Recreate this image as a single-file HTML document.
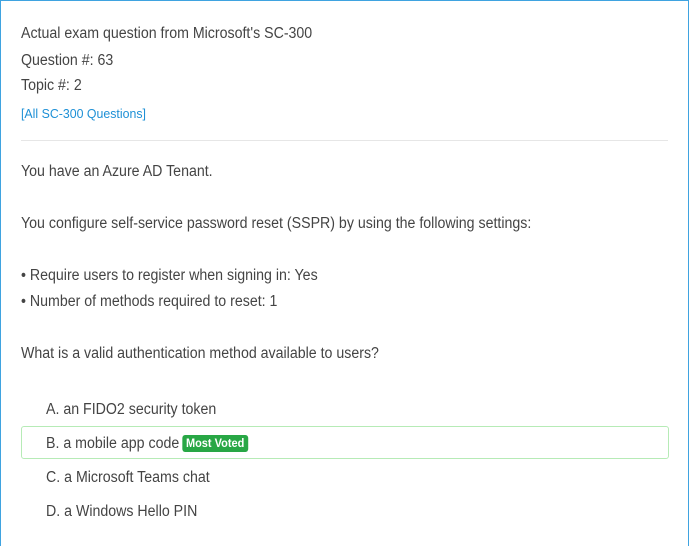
<!DOCTYPE html>
<html><head><style>
html,body{margin:0;padding:0;background:#fff}
body{width:690px;height:541px;position:relative;overflow:hidden;font-family:"Liberation Sans",sans-serif;color:#444}
.frame{position:absolute;left:0;top:0;width:687px;height:545px;border:1px solid #3fa3e0;border-bottom:none}
.t{position:absolute;left:21px;font-size:15.5px;white-space:nowrap;transform:scaleX(0.915);transform-origin:left center;line-height:20px}
.link{color:#1e90d6;font-size:13px;transform:scaleX(0.95)}
hr{position:absolute;left:21px;top:140px;width:647px;margin:0;border:0;border-top:1px solid #e6e6e6}
.box{position:absolute;left:21px;top:426px;width:646px;height:31px;border:1px solid #b6ebb6;border-radius:3px}
.badge{display:inline-block;background:#28a745;color:#fff;font-weight:bold;font-size:12px;padding:1px 4px;border-radius:3px;line-height:15px;vertical-align:1px;margin-left:-1px}
</style></head><body>
<div class="frame"></div>
<div class="t" style="top:24px">Actual exam question from Microsoft's SC-300</div>
<div class="t" style="top:51px">Question #: 63</div>
<div class="t" style="top:76px">Topic #: 2</div>
<div class="t link" style="top:104px">[All SC-300 Questions]</div>
<hr>
<div class="t" style="top:162px">You have an Azure AD Tenant.</div>
<div class="t" style="top:214px">You configure self-service password reset (SSPR) by using the following settings:</div>
<div class="t" style="top:266px">• Require users to register when signing in: Yes</div>
<div class="t" style="top:292px">• Number of methods required to reset: 1</div>
<div class="t" style="top:344px">What is a valid authentication method available to users?</div>
<div class="t" style="top:400px;left:46px">A. an FIDO2 security token</div>
<div class="box"></div>
<div class="t" style="top:434px;left:46px">B. a mobile app code <span class="badge">Most Voted</span></div>
<div class="t" style="top:468px;left:46px">C. a Microsoft Teams chat</div>
<div class="t" style="top:502px;left:46px">D. a Windows Hello PIN</div>
</body></html>
